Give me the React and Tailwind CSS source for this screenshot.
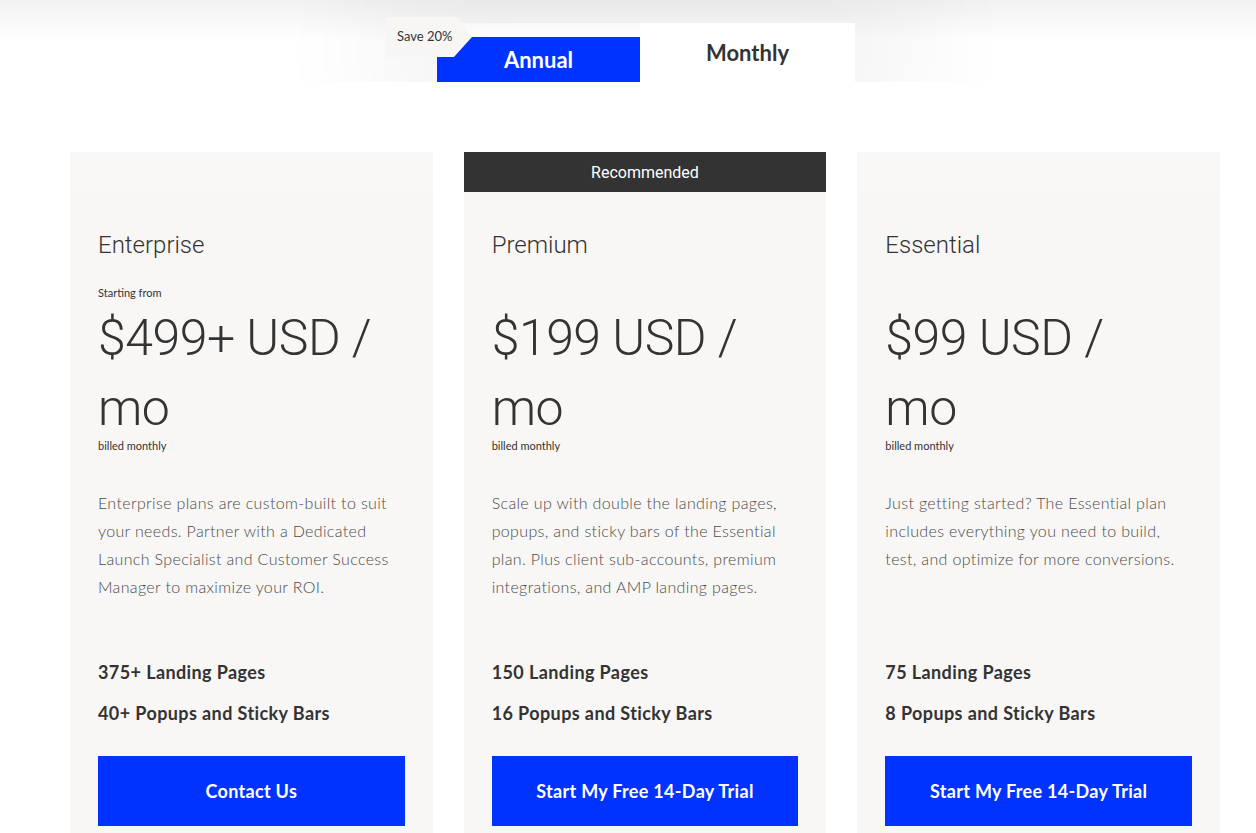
const plans = [
  {
    name: 'Enterprise',
    from: true,
    price: '$499+ USD / mo',
    desc: 'Enterprise plans are custom-built to suit your needs. Partner with a Dedicated Launch Specialist and Customer Success Manager to maximize your ROI.',
    features: ['375+ Landing Pages', '40+ Popups and Sticky Bars'],
    cta: 'Contact Us',
  },
  {
    name: 'Premium',
    recommended: true,
    price: '$199 USD / mo',
    desc: 'Scale up with double the landing pages, popups, and sticky bars of the Essential plan. Plus client sub-accounts, premium integrations, and AMP landing pages.',
    features: ['150 Landing Pages', '16 Popups and Sticky Bars'],
    cta: 'Start My Free 14-Day Trial',
  },
  {
    name: 'Essential',
    price: '$99 USD / mo',
    desc: 'Just getting started? The Essential plan includes everything you need to build, test, and optimize for more conversions.',
    features: ['75 Landing Pages', '8 Popups and Sticky Bars'],
    cta: 'Start My Free 14-Day Trial',
  },
];

function PlanCard({ plan }) {
  return (
    <div className="flex flex-col">
      {plan.recommended ? (
        <div className="h-10 bg-[#333333] text-white text-[16px] flex items-center justify-center pt-[2px] font-[family-name:Roboto,sans-serif]">
          Recommended
        </div>
      ) : (
        <div className="h-10 bg-[#f9f8f7]" />
      )}
      <div className="flex-1 bg-[#f8f7f5] px-7 pt-[38px] pb-2 font-[family-name:Lato,'Open_Sans',sans-serif]">
        <h2 className="text-[24px] leading-[30px] font-light text-[#333] font-[family-name:Roboto,sans-serif]">
          {plan.name}
        </h2>
        <div className="mt-[26px] h-[14px] text-[11px] leading-[14px] text-[#333]">
          {plan.from ? 'Starting from' : ''}
        </div>
        <div className="mt-[3px] max-w-[280px] text-[50px] leading-[70px] font-light text-[#333] tracking-[-0.5px] font-[family-name:Roboto,sans-serif]">
          {plan.price}
        </div>
        <div className="-mt-1 text-[11px] leading-[14px] text-[#333]">billed monthly</div>
        <p className="mt-[36px] h-[112px] text-[16px] leading-[28px] font-light text-[#4a4a4a] tracking-[0.35px]">
          {plan.desc}
        </p>
        <div className="mt-[59px] flex flex-col gap-[17px]">
          {plan.features.map((f) => (
            <div key={f} className="text-[18px] leading-[24px] font-bold text-[#333] tracking-[0.4px]">
              {f}
            </div>
          ))}
        </div>
        <button className="mt-[31px] w-full h-[70px] bg-[#0033ff] text-white text-[18px] font-bold tracking-[0.3px]">
          {plan.cta}
        </button>
      </div>
    </div>
  );
}

export default function App() {
  return (
    <div className="min-h-screen bg-white overflow-hidden font-[family-name:Lato,'Open_Sans',sans-serif]">
      <div className="h-[82px] bg-gradient-to-b from-[#f1f1f1] via-white to-white overflow-hidden flex justify-center">
        <div className="relative ml-[36px] mt-[23px] flex items-end shadow-[0_0_110px_70px_rgba(0,0,0,0.04)]">
          <div className="absolute left-[-51px] top-[-6px] w-[86px] h-[40px] bg-[#f7f6f4] text-[13px] text-[#333] flex items-center pl-[11px] shadow-[0_1px_3px_rgba(0,0,0,0.12)] z-10 [clip-path:polygon(0_0,83%_0,100%_50%,79%_100%,0_100%)]">
            Save 20%
          </div>
          <button className="w-[203px] h-[45px] bg-[#0033ff] text-white text-[22px] font-bold">
            Annual
          </button>
          <button className="w-[215px] h-[59px] bg-white text-[#333] text-[22px] font-bold pb-[1px]">
            Monthly
          </button>
        </div>
      </div>
      <div className="mt-[70px] ml-[70px] mr-[36px] grid grid-cols-3 gap-x-[31px]">
        {plans.map((p) => (
          <PlanCard key={p.name} plan={p} />
        ))}
      </div>
    </div>
  );
}
